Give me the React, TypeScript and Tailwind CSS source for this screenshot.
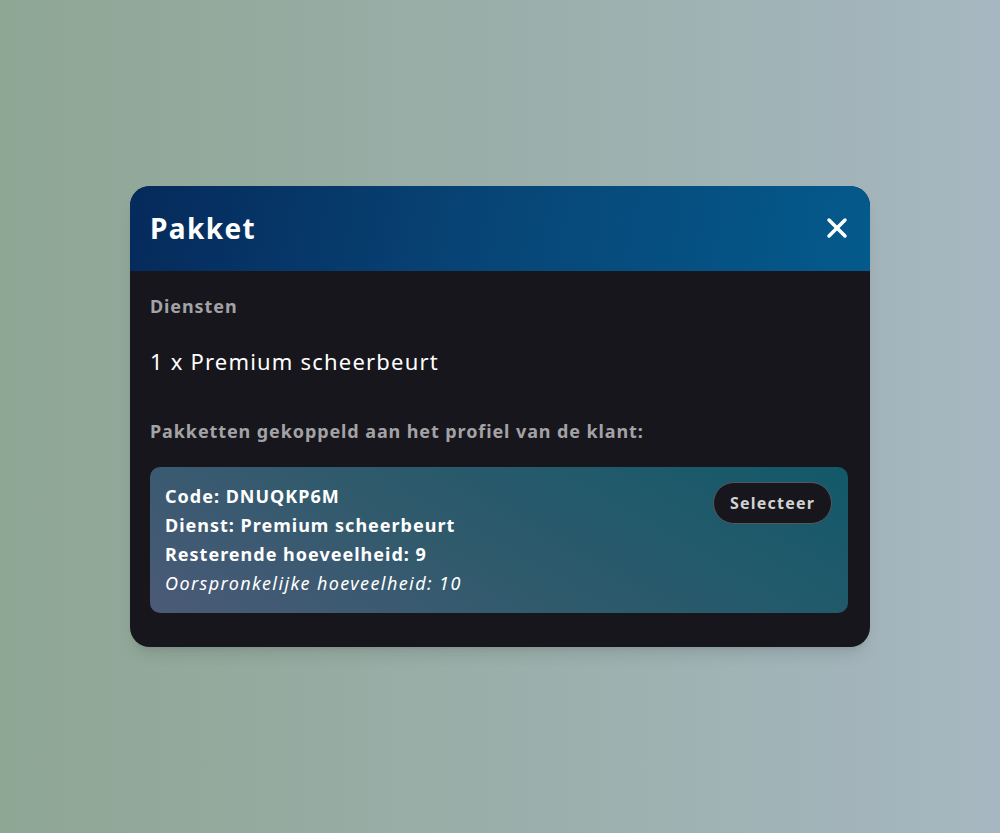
import { X } from "lucide-react";

const font = { fontFamily: '"Noto Sans", "Liberation Sans", sans-serif' };

const PackageCard = () => {
  return (
    <div className="flex justify-between rounded-[10px] bg-[linear-gradient(30deg,#4b5a77_0%,#2f5a6c_45%,#12596a_100%)] pl-[15px] pr-[16px] pt-[15px] pb-[15px]">
      <div className="flex flex-col text-[18px] leading-[29px] text-white">
        <p className="font-bold tracking-[1px]">Code: DNUQKP6M</p>
        <p className="font-bold tracking-[1px]">Dienst: Premium scheerbeurt</p>
        <p className="font-bold tracking-[1px]">Resterende hoeveelheid: 9</p>
        <p className="italic tracking-[1.4px]">Oorspronkelijke hoeveelheid: 10</p>
      </div>
      <button className="h-[42px] self-start rounded-full border border-[#56565e] bg-[#17161c] px-[16px] text-[16px] font-bold tracking-[1.2px] text-[#d2d2d2]">
        Selecteer
      </button>
    </div>
  );
};

export default function App() {
  return (
    <div
      style={font}
      className="flex h-[833px] w-full items-center justify-center bg-[linear-gradient(90deg,#8ea694_0%,#9aafaa_50%,#a6b7c1_100%)]"
    >
      <div className="w-[740px] overflow-hidden rounded-[20px] bg-[#17161c] shadow-lg">
        <div className="flex h-[85px] items-center justify-between bg-[linear-gradient(100deg,#052a5b_0%,#074677_50%,#045a8c_100%)] pl-[20px] pr-[17px] pb-[2px]">
          <h1 className="text-[28px] font-bold tracking-[1.4px] text-white">Pakket</h1>
          <X className="h-[32px] w-[32px] text-white" strokeWidth={2.6} />
        </div>
        <div className="flex flex-col pl-[20px] pr-[22px] pt-[22px] pb-[34px]">
          <h2 className="text-[18px] font-bold tracking-[0.9px] text-[#a3a3a6]">Diensten</h2>
          <p className="mt-[25px] text-[22px] tracking-[1.2px] text-white">1 x Premium scheerbeurt</p>
          <h2 className="mt-[40px] text-[18px] font-bold tracking-[0.9px] text-[#a3a3a6]">
            Pakketten gekoppeld aan het profiel van de klant:
          </h2>
          <div className="mt-[22px]">
            <PackageCard />
          </div>
        </div>
      </div>
    </div>
  );
}
